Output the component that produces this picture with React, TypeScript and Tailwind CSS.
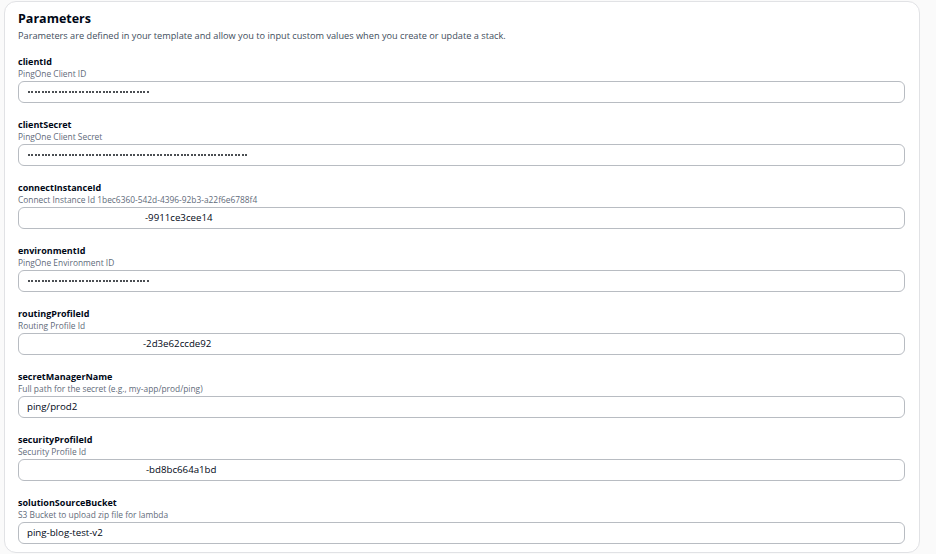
const fields = [
  { name: "clientId", hint: "PingOne Client ID", dots: 36 },
  { name: "clientSecret", hint: "PingOne Client Secret", dots: 65 },
  {
    name: "connectInstanceId",
    hint: "Connect Instance Id 1bec6360-542d-4396-92b3-a22f6e6788f4",
    value: "-9911ce3cee14",
    indent: "pl-[126px]",
  },
  { name: "environmentId", hint: "PingOne Environment ID", dots: 36 },
  {
    name: "routingProfileId",
    hint: "Routing Profile Id",
    value: "-2d3e62ccde92",
    indent: "pl-[124px]",
  },
  {
    name: "secretManagerName",
    hint: "Full path for the secret (e.g., my-app/prod/ping)",
    value: "ping/prod2",
    indent: "pl-[8px]",
  },
  {
    name: "securityProfileId",
    hint: "Security Profile Id",
    value: "-bd8bc664a1bd",
    indent: "pl-[127px]",
  },
  {
    name: "solutionSourceBucket",
    hint: "S3 Bucket to upload zip file for lambda",
    value: "ping-blog-test-v2",
    indent: "pl-[8px]",
  },
];

type Field = (typeof fields)[number] & { dots?: number; value?: string; indent?: string };

// masked values are drawn as a row of tiny dots
function Masked({ count }: { count: number }) {
  return (
    <span className="flex gap-[1.4px] pl-[9px]">
      {Array.from({ length: count }, (_, i) => (
        <span key={i} className="h-[2px] w-[2px] rounded-full bg-[#0f141a]" />
      ))}
    </span>
  );
}

function ParamField({ field }: { field: Field }) {
  return (
    <div className="flex flex-col">
      <p className="text-[9px] leading-[12px] font-bold text-[#000716]">{field.name}</p>
      <p className="text-[8.4px] leading-[11.5px] text-[#5f6b7a]">{field.hint}</p>
      <div className="mt-[1.5px] flex h-[22px] w-[887px] items-center rounded-[6px] border border-[#b8bcc2] bg-white">
        {field.dots ? (
          <Masked count={field.dots} />
        ) : (
          <span className={`${field.indent} text-[9.7px] text-[#000716]`}>{field.value}</span>
        )}
      </div>
    </div>
  );
}

export default function App() {
  return (
    <div
      className="flex h-[554px] w-[936px] bg-[#fafafa] pt-[1px] pl-[4px]"
      style={{ fontFamily: '"Open Sans", "Noto Sans", sans-serif' }}
    >
      <section className="h-[552px] w-[916px] rounded-[12px] border border-[#e1e2e5] bg-white pl-[13px] pt-[9px]">
        <h2 className="text-[12.5px] leading-[16px] font-bold text-[#000716]">Parameters</h2>
        <p className="mt-[3px] text-[9.2px] leading-[12px] text-[#414d5c]">
          Parameters are defined in your template and allow you to input custom values when you
          create or update a stack.
        </p>
        <div className="mt-[14px] flex flex-col gap-[16px]">
          {fields.map((field) => (
            <ParamField key={field.name} field={field as Field} />
          ))}
        </div>
      </section>
    </div>
  );
}
